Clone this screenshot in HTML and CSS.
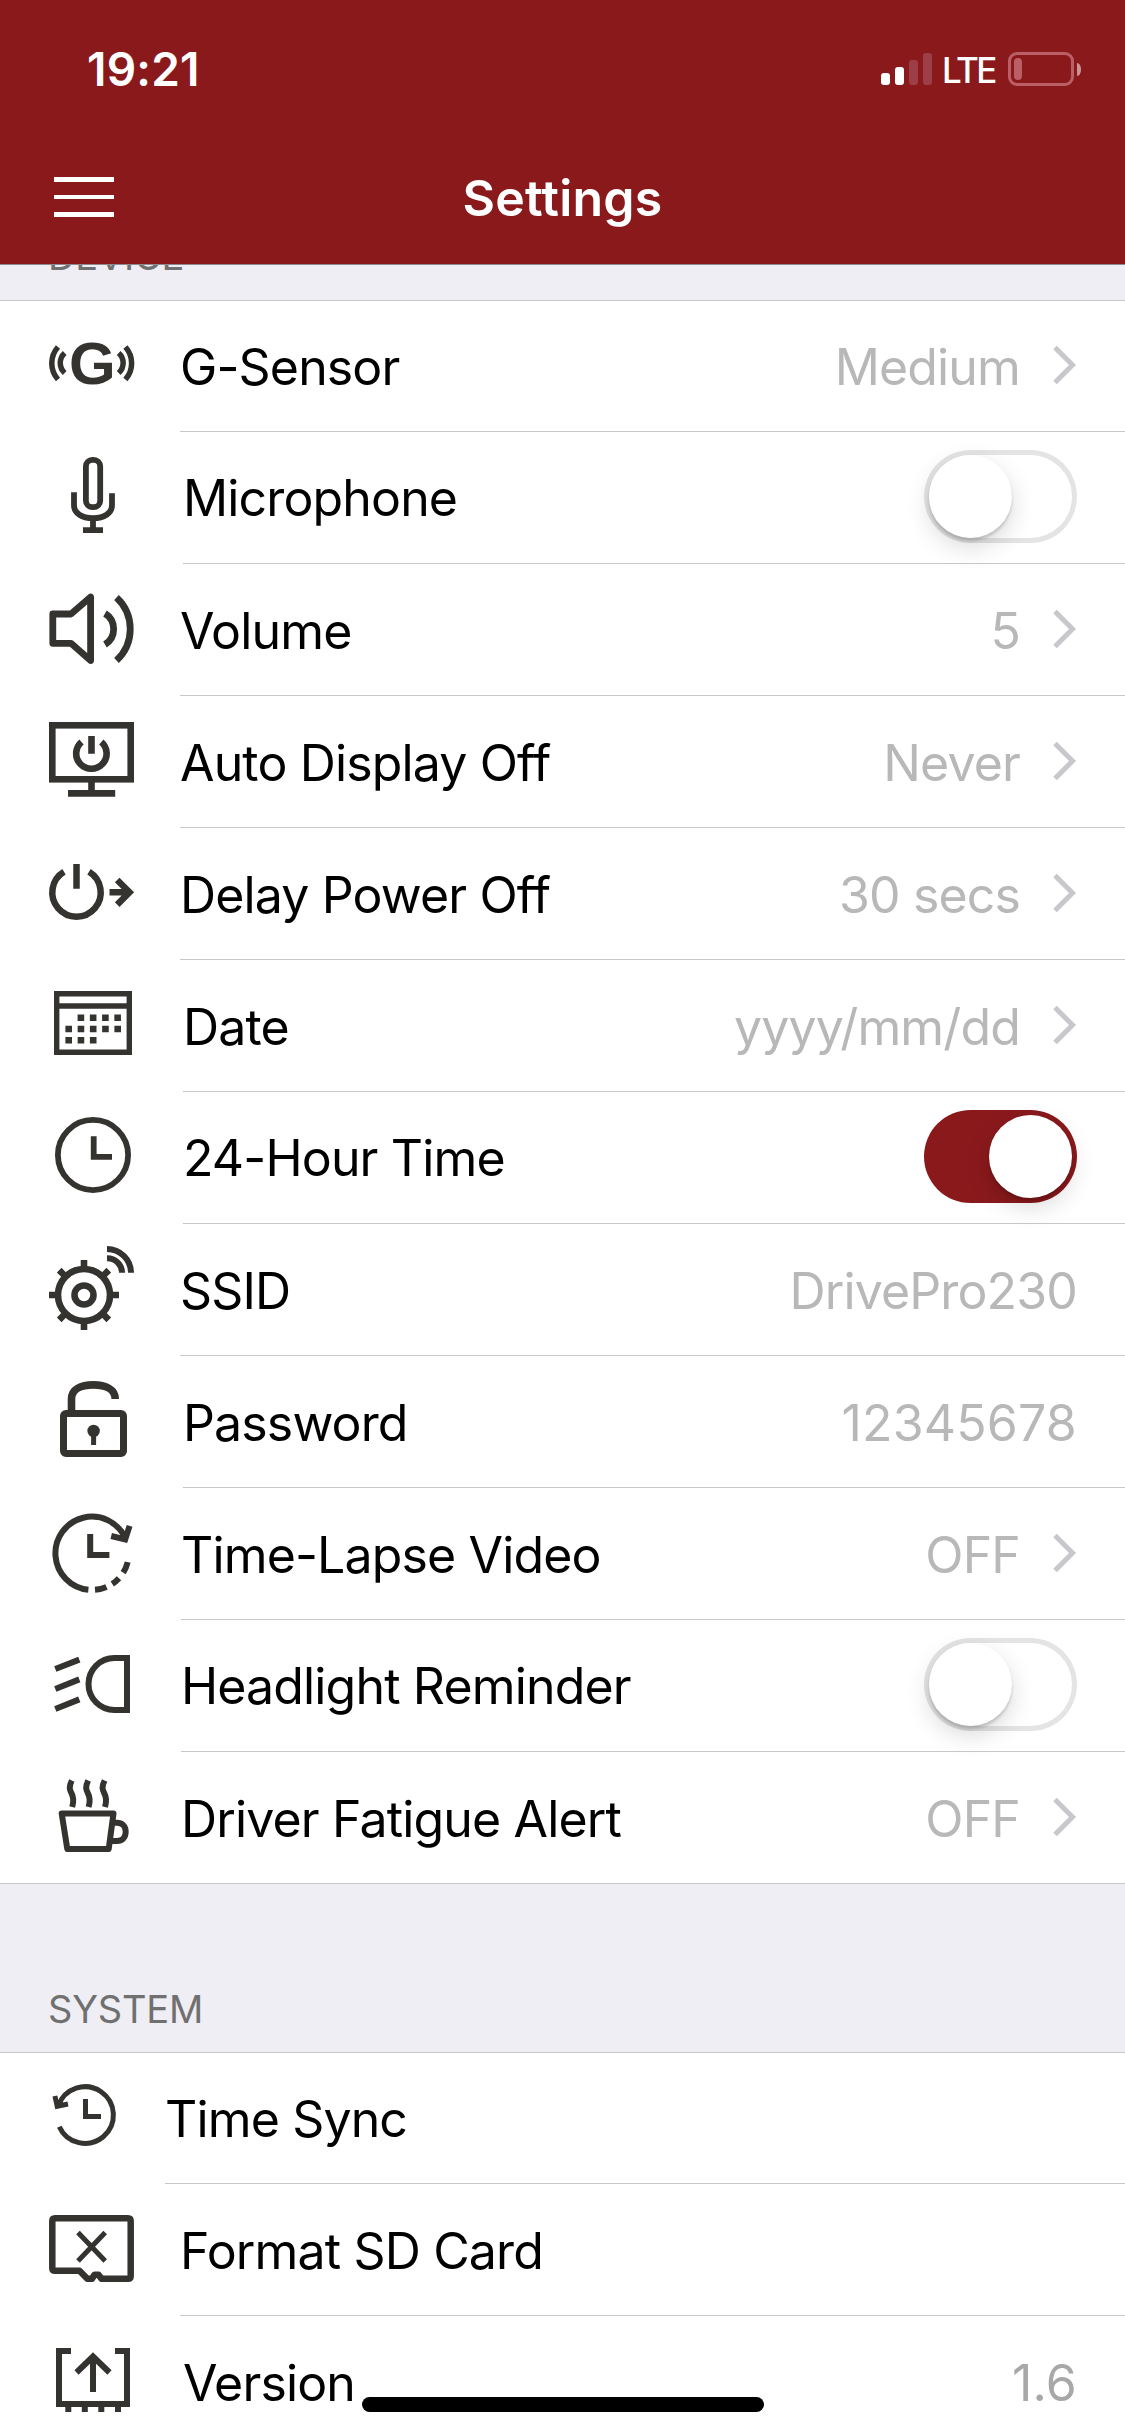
FILE: index.html
```html
<!DOCTYPE html>
<html lang="en">
<head>
    <meta charset="UTF-8">
    <meta name="viewport" content="width=device-width, initial-scale=1.0">
    <title>Settings</title>
    <link rel="stylesheet" href="styles.css">
</head>
<body>
    <header class="header">
        <div class="status-bar">
            <span class="time">19:21</span>
            <div class="status-icons">
                <div class="signal">
                    <span class="bar bar-1"></span>
                    <span class="bar bar-2"></span>
                    <span class="bar bar-3 weak"></span>
                    <span class="bar bar-4 weak"></span>
                </div>
                <span class="network">LTE</span>
                <div class="battery"><span class="battery-level"></span></div>
                <span class="battery-tip"></span>
            </div>
        </div>
        <div class="nav-bar">
            <div class="menu">
                <span></span>
                <span></span>
                <span></span>
            </div>
            <h1 class="title">Settings</h1>
        </div>
    </header>

    <div class="section-title device"><span>DEVICE</span></div>

    <div class="list">
        <div class="row first">
            <div class="icon">
                <svg viewBox="0 0 92 93">
                    <text class="icon-letter" x="23" y="64">G</text>
                    <path stroke-width="5.5" d="M12 27A24.3 24.3 0 0 0 12 59.5M18.7 33A13.5 13.5 0 0 0 18.7 53M79.4 27A24.3 24.3 0 0 1 79.4 59.5M72.7 33A13.5 13.5 0 0 1 72.7 53"/>
                </svg>
            </div>
            <div class="row-body">
                <span class="label">G-Sensor</span>
                <span class="value">Medium</span>
                <svg class="chevron" viewBox="0 0 24 40"><path d="M2 2.5L19.5 20L2 37.5"/></svg>
            </div>
        </div>

        <div class="row wide toggle">
            <div class="icon">
                <svg viewBox="0 0 92 93" stroke-width="5.8">
                    <rect x="39.9" y="8.9" width="14.3" height="47.3" rx="6.5"/>
                    <path d="M28 41.3V54C28 62.5 36 67.2 47 67.2S66 62.5 66 54V42.3M47 67V79M37 79.2H57"/>
                </svg>
            </div>
            <div class="row-body">
                <span class="label">Microphone</span>
                <div class="switch"><span class="knob"></span></div>
            </div>
        </div>

        <div class="row">
            <div class="icon">
                <svg viewBox="0 0 92 93" stroke-width="6.8">
                    <path stroke-linejoin="round" d="M6.8 31H25L44.6 14V77.5L25 60.3H6.8Z"/>
                    <path d="M59 30.5A18.2 18.2 0 0 1 59 61.5M70.5 14.5A43 43 0 0 1 70.5 77.5"/>
                </svg>
            </div>
            <div class="row-body">
                <span class="label">Volume</span>
                <span class="value">5</span>
                <svg class="chevron" viewBox="0 0 24 40"><path d="M2 2.5L19.5 20L2 37.5"/></svg>
            </div>
        </div>

        <div class="row">
            <div class="icon">
                <svg viewBox="0 0 92 93" stroke-width="6.6">
                    <rect x="6.3" y="10.3" width="78.4" height="54"/>
                    <path d="M45.5 64V78M22 78.4H69.2M45.5 21V38.7M35.5 27A15.2 15.2 0 1 0 55.3 27"/>
                </svg>
            </div>
            <div class="row-body">
                <span class="label">Auto Display Off</span>
                <span class="value">Never</span>
                <svg class="chevron" viewBox="0 0 24 40"><path d="M2 2.5L19.5 20L2 37.5"/></svg>
            </div>
        </div>

        <div class="row">
            <div class="icon">
                <svg viewBox="0 0 92 93" stroke-width="6.5">
                    <path d="M18 24.8A24.2 24.2 0 1 0 43 24.8M30.5 17V41.7M63.5 45.3H82M71.2 33L83.5 45.3L71.2 57.6"/>
                </svg>
            </div>
            <div class="row-body">
                <span class="label">Delay Power Off</span>
                <span class="value">30 secs</span>
                <svg class="chevron" viewBox="0 0 24 40"><path d="M2 2.5L19.5 20L2 37.5"/></svg>
            </div>
        </div>

        <div class="row wide">
            <div class="icon">
                <svg viewBox="0 0 92 93" stroke-width="5.4">
                    <path d="M10.7 14.7H83.3V73.3H10.7ZM10.7 27H83.3"/>
                    <!-- calendar days -->
                    <path stroke-width="6.6" stroke-dasharray="6.6 5.65" d="M31.6 38.7H75.2M19.4 50H75.2M19.4 61.3H51"/>
                </svg>
            </div>
            <div class="row-body">
                <span class="label">Date</span>
                <span class="value">yyyy/mm/dd</span>
                <svg class="chevron" viewBox="0 0 24 40"><path d="M2 2.5L19.5 20L2 37.5"/></svg>
            </div>
        </div>

        <div class="row wide toggle">
            <div class="icon">
                <svg viewBox="0 0 92 93" stroke-width="5.8">
                    <circle cx="47" cy="44" r="35.1"/>
                    <path d="M47.7 25.3V45.9H66"/>
                </svg>
            </div>
            <div class="row-body">
                <span class="label">24-Hour Time</span>
                <div class="switch on"><span class="knob"></span></div>
            </div>
        </div>

        <div class="row">
            <div class="icon">
                <svg viewBox="0 0 92 93" stroke-width="6.6">
                    <circle cx="38" cy="52" r="26"/>
                    <circle cx="38" cy="52" r="9.5"/>
                    <path d="M38 17V26M38 78V87M3 52H12M64 52H73M13.2 27.2L20 34M56 70L62.8 76.8M13.2 76.8L20 70M56 34L62.8 27.2"/>
                    <path stroke-width="6" d="M61 6A24 24 0 0 1 85 29.7M61 15.2A14.8 14.6 0 0 1 76 29.7"/>
                </svg>
            </div>
            <div class="row-body">
                <span class="label">SSID</span>
                <span class="value">DrivePro230</span>
            </div>
        </div>

        <div class="row wide">
            <div class="icon">
                <svg viewBox="0 0 92 93" stroke-width="7">
                    <rect x="17.5" y="38.6" width="60" height="40" rx="2.5"/>
                    <path stroke-width="7.6" d="M25.5 38V24C25.5 14 35 9.9 47.3 9.9S69.2 14 69.2 24"/>
                    <circle class="solid" cx="47.6" cy="56" r="6.2"/>
                    <path stroke-width="5" d="M47.6 58V70"/>
                </svg>
            </div>
            <div class="row-body">
                <span class="label">Password</span>
                <span class="value loose">12345678</span>
            </div>
        </div>

        <div class="row mid">
            <div class="icon">
                <svg viewBox="0 0 92 93" stroke-width="6">
                    <path d="M42.4 82.7A36.6 36.6 0 1 1 79.5 31.5M44.2 27V48H63.4M83.6 18.8L79.2 32.5L65.2 29"/>
                    <path d="M81.7 55.1A36.6 36.6 0 0 1 77.2 65.7M73 71.3A36.6 36.6 0 0 1 66.3 77M60.5 80A36.6 36.6 0 0 1 49 82.8"/>
                </svg>
            </div>
            <div class="row-body">
                <span class="label">Time-Lapse Video</span>
                <span class="value">OFF</span>
                <svg class="chevron" viewBox="0 0 24 40"><path d="M2 2.5L19.5 20L2 37.5"/></svg>
            </div>
        </div>

        <div class="row mid toggle">
            <div class="icon">
                <svg viewBox="0 0 92 93" stroke-width="6">
                    <path d="M81 19H68.5A26 26 0 0 0 68.5 71H81ZM9.3 30L33.3 20.6M9.3 50L33.3 40.4M9.3 70L33.3 60.4"/>
                </svg>
            </div>
            <div class="row-body">
                <span class="label">Headlight Reminder</span>
                <div class="switch"><span class="knob"></span></div>
            </div>
        </div>

        <div class="row mid last">
            <div class="icon">
                <svg viewBox="0 0 92 93" stroke-width="6">
                    <path stroke-linejoin="round" d="M15.7 42.5H67.5L62.7 78H21.3Z"/>
                    <path d="M67 51.7H71C76 51.7 79.7 55 79.7 60.8S76 70 71 70H64.5"/>
                    <path d="M25.8 9.5C22.5 16 23.7 19 25.6 22.5S28 30 26.2 36M42.2 9.5C38.9 16 40.1 19 42 22.5S44.4 30 42.6 36M58.6 9.5C55.3 16 56.5 19 58.4 22.5S60.8 30 59 36"/>
                </svg>
            </div>
            <div class="row-body">
                <span class="label">Driver Fatigue Alert</span>
                <span class="value">OFF</span>
                <svg class="chevron" viewBox="0 0 24 40"><path d="M2 2.5L19.5 20L2 37.5"/></svg>
            </div>
        </div>
    </div>

    <div class="section-title system"><span>SYSTEM</span></div>

    <div class="list">
        <div class="row first narrow">
            <div class="icon">
                <svg viewBox="0 0 92 93" stroke-width="5">
                    <path d="M13.3 54.7A28.3 28.3 0 1 0 12.3 34M39.5 27V44.5H55M8.9 24L11.2 34.2L22 32"/>
                </svg>
            </div>
            <div class="row-body">
                <span class="label">Time Sync</span>
            </div>
        </div>

        <div class="row">
            <div class="icon">
                <svg viewBox="0 0 92 93" stroke-width="6.5">
                    <path stroke-linejoin="round" d="M9 15.2H82Q84.7 15.2 84.7 18V73Q84.7 75.8 82 75.8H55.5L52.5 71.8H48.5L46 75.8H41.3L33.5 67.8H9Q6.3 67.8 6.3 65V18Q6.3 15.2 9 15.2Z"/>
                    <path stroke-width="5" d="M32 29.5L59.2 58M59.2 29.5L32 58"/>
                </svg>
            </div>
            <div class="row-body">
                <span class="label">Format SD Card</span>
            </div>
        </div>

        <div class="row wide">
            <div class="icon">
                <svg viewBox="0 0 92 93" stroke-width="6">
                    <path d="M25 16H13V69H81V16H69M47 20V57M30.5 37.5L47 21.5L63.5 37.5"/>
                    <path d="M22.3 70V77M38.8 70V77M55.3 70V77M72 70V77"/>
                </svg>
            </div>
            <div class="row-body">
                <span class="label">Version</span>
                <span class="value loose dark">1.6</span>
            </div>
        </div>
    </div>

    <div class="home-indicator"></div>
</body>
</html>
```

FILE: styles.css
```css
* {
    box-sizing: border-box;
}

body {
    margin: 0;
    width: 1125px;
    height: 2436px;
    overflow: hidden;
    background-color: #efeef4;
    font-family: Inter, "Liberation Sans", sans-serif;
    color: #000;
}

/* Header */
.header {
    height: 265px;
    background-color: #8a191c;
    border-bottom: 1px solid #8f8a8d;
    color: #fff;
}

.status-bar {
    display: flex;
    justify-content: space-between;
    height: 132px;
    padding: 0 44px 0 87px;
}

.time {
    font-size: 46px;
    font-weight: 600;
    line-height: 138px;
    letter-spacing: 0.2px;
}

.status-icons {
    display: flex;
    align-items: center;
    height: 138px;
}

.signal {
    display: flex;
    align-items: flex-end;
    gap: 5px;
    height: 32px;
}

.bar {
    width: 9px;
    border-radius: 3px;
    background-color: #fff;
}

.bar-1 { height: 12px; }
.bar-2 { height: 18px; }
.bar-3 { height: 25px; }
.bar-4 { height: 32px; }

.bar.weak {
    background-color: #9e3e47;
}

.network {
    width: 76px;
    padding-left: 10px;
    padding-top: 2px;
    font-size: 35px;
    font-weight: 500;
    line-height: 42px;
    letter-spacing: -2.6px;
}

.battery {
    width: 66px;
    height: 34px;
    padding: 3px;
    border: 3px solid #bb5f67;
    border-radius: 9px;
}

.battery-level {
    display: block;
    width: 8px;
    height: 22px;
    border-radius: 4px;
    background-color: #bb5f67;
}

.battery-tip {
    width: 4px;
    height: 13px;
    margin-left: 3px;
    border-radius: 0 4px 4px 0 / 0 6px 6px 0;
    background-color: #cd9296;
}

.nav-bar {
    display: grid;
    grid-template-columns: 200px 1fr 200px;
    align-items: center;
    height: 132px;
    padding-left: 54px;
    padding-right: 54px;
}

.menu {
    display: flex;
    flex-direction: column;
    gap: 13px;
    width: 60px;
    margin-bottom: 2px;
}

.menu span {
    height: 4.6px;
    background-color: #fff;
}

.title {
    margin: 0;
    font-size: 50px;
    font-weight: 600;
    line-height: 132px;
    letter-spacing: 0.2px;
    text-align: center;
}

/* Section titles */
.section-title {
    display: flex;
    align-items: flex-end;
    padding-left: 48px;
    font-size: 38px;
    line-height: 46px;
    letter-spacing: -0.2px;
    color: #707070;
    overflow: hidden;
}

.section-title.device {
    height: 35px;
    padding-bottom: 21px;
}

.section-title.system {
    height: 168px;
    padding-bottom: 20px;
}

/* Lists */
.list {
    background-color: #fff;
    border-top: 1px solid #c8c7cc;
}

.row {
    display: flex;
    height: 132px;
}

.row.first {
    height: 131px;
}

.icon {
    flex: none;
    width: 180px;
    padding: 19px 0 0 46px;
}

.wide .icon { width: 183px; }
.mid .icon { width: 181px; }
.narrow .icon { width: 165px; }

.icon svg {
    display: block;
    width: 92px;
    height: 93px;
    fill: none;
    stroke: #343330;
}

.icon .solid,
.icon .icon-letter {
    fill: #343330;
    stroke: none;
}

.icon-letter {
    font-family: "Liberation Sans", sans-serif;
    font-size: 60px;
    font-weight: bold;
}

.row-body {
    display: flex;
    flex: 1;
    align-items: center;
    padding-right: 48px;
    border-bottom: 1px solid #c8c7cc;
}

.last {
    border-bottom: 1px solid #c8c7cc;
}

.last .row-body {
    border-bottom: none;
}

.label,
.value {
    padding-top: 2px;
    font-size: 50px;
    line-height: 60px;
    letter-spacing: -0.85px;
    white-space: nowrap;
}

.toggle .label,
.first .label,
.first .value {
    padding-top: 1px;
}

.label {
    flex: 1;
}

.value {
    color: #b8b8b8;
}

.value.loose {
    letter-spacing: 0.2px;
}

.value.dark {
    color: #a8a8a8;
}

.chevron {
    width: 24px;
    height: 40px;
    margin-left: 33px;
    margin-bottom: 2px;
    fill: none;
    stroke: #c7c7cc;
    stroke-width: 5;
}

/* Switches */
.switch {
    display: flex;
    width: 153px;
    height: 93px;
    margin-bottom: 2px;
    padding: 5px;
    border-radius: 47px;
    box-shadow: inset 0 0 0 5px #e4e4e4;
}

.switch.on {
    justify-content: flex-end;
    background-color: #8a191c;
    box-shadow: none;
}

.knob {
    width: 83px;
    height: 83px;
    border-radius: 50%;
    background-color: #fff;
    box-shadow: 0 9px 24px rgba(0, 0, 0, 0.15), 0 3px 3px rgba(0, 0, 0, 0.16);
}

.home-indicator {
    position: absolute;
    top: 2397px;
    left: 362px;
    width: 402px;
    height: 15px;
    border-radius: 8px;
    background-color: #000;
}
```
